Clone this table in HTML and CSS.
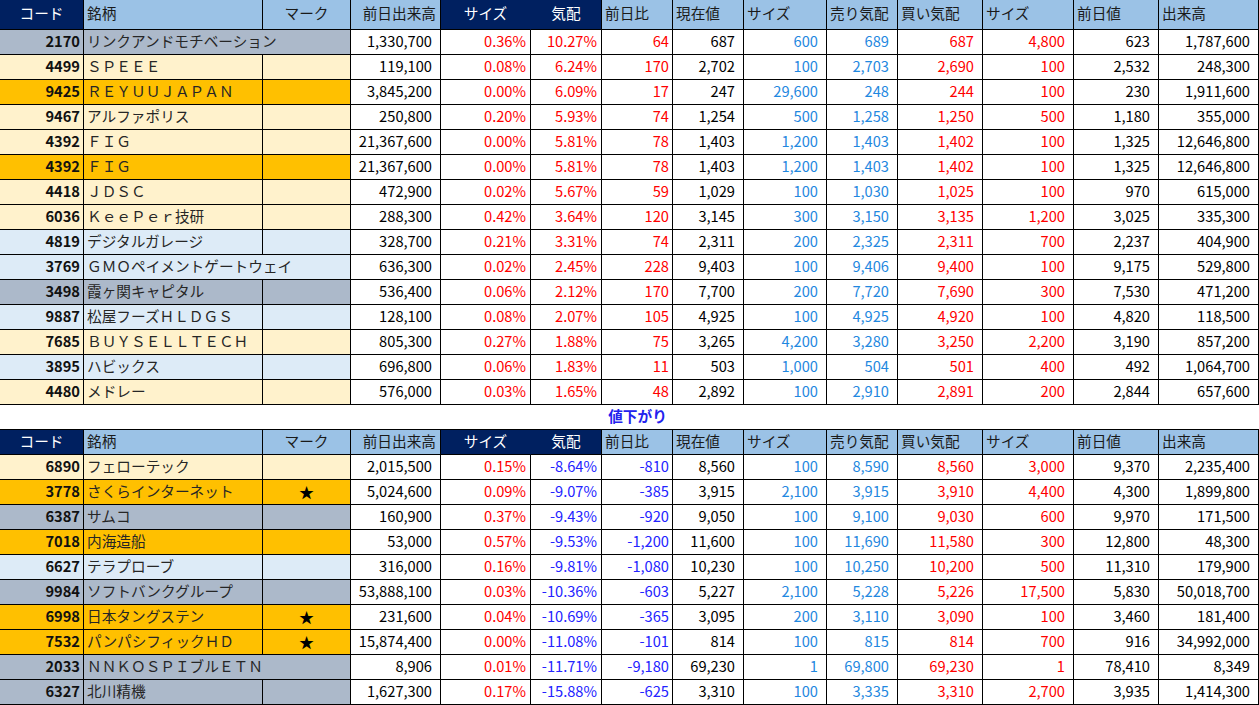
FILE: index.html
```html
<!DOCTYPE html>
<html lang="ja">
<head>
<meta charset="utf-8">
<title>値上がり・値下がり</title>
<link rel="stylesheet" href="styles.css">
</head>
<body>
<div class="sheet">
  <div class="row hdr hdr1">
    <div class="cell h-navy hc">コード</div>
    <div class="cell h-lb hl">銘柄</div>
    <div class="cell h-lb hc">マーク</div>
    <div class="cell h-lb hr">前日出来高</div>
    <div class="cell h-navy hc join">サイズ</div>
    <div class="cell h-navy hc">気配</div>
    <div class="cell h-lb hl">前日比</div>
    <div class="cell h-lb hl">現在値</div>
    <div class="cell h-lb hl">サイズ</div>
    <div class="cell h-lb hl">売り気配</div>
    <div class="cell h-lb hl">買い気配</div>
    <div class="cell h-lb hl">サイズ</div>
    <div class="cell h-lb hl">前日値</div>
    <div class="cell h-lb hl">出来高</div>
  </div>

  <div class="row">
    <div class="cell code bg-gray">2170</div>
    <div class="cell name bg-gray wide">リンクアンドモチベーション</div>
    <div class="cell num">1,330,700</div>
    <div class="cell pct red">0.36%</div>
    <div class="cell pct red">10.27%</div>
    <div class="cell chg red">64</div>
    <div class="cell num">687</div>
    <div class="cell num sky">600</div>
    <div class="cell num sky">689</div>
    <div class="cell num red">687</div>
    <div class="cell num red">4,800</div>
    <div class="cell num">623</div>
    <div class="cell num">1,787,600</div>
  </div>
  <div class="row">
    <div class="cell code bg-yel">4499</div>
    <div class="cell name bg-yel">ＳＰＥＥＥ</div>
    <div class="cell mark bg-yel"></div>
    <div class="cell num">119,100</div>
    <div class="cell pct red">0.08%</div>
    <div class="cell pct red">6.24%</div>
    <div class="cell chg red">170</div>
    <div class="cell num">2,702</div>
    <div class="cell num sky">100</div>
    <div class="cell num sky">2,703</div>
    <div class="cell num red">2,690</div>
    <div class="cell num red">100</div>
    <div class="cell num">2,532</div>
    <div class="cell num">248,300</div>
  </div>
  <div class="row">
    <div class="cell code bg-gold">9425</div>
    <div class="cell name bg-gold">ＲＥＹＵＵＪＡＰＡＮ</div>
    <div class="cell mark bg-gold"></div>
    <div class="cell num">3,845,200</div>
    <div class="cell pct red">0.00%</div>
    <div class="cell pct red">6.09%</div>
    <div class="cell chg red">17</div>
    <div class="cell num">247</div>
    <div class="cell num sky">29,600</div>
    <div class="cell num sky">248</div>
    <div class="cell num red">244</div>
    <div class="cell num red">100</div>
    <div class="cell num">230</div>
    <div class="cell num">1,911,600</div>
  </div>
  <div class="row">
    <div class="cell code bg-yel">9467</div>
    <div class="cell name bg-yel">アルファポリス</div>
    <div class="cell mark bg-yel"></div>
    <div class="cell num">250,800</div>
    <div class="cell pct red">0.20%</div>
    <div class="cell pct red">5.93%</div>
    <div class="cell chg red">74</div>
    <div class="cell num">1,254</div>
    <div class="cell num sky">500</div>
    <div class="cell num sky">1,258</div>
    <div class="cell num red">1,250</div>
    <div class="cell num red">500</div>
    <div class="cell num">1,180</div>
    <div class="cell num">355,000</div>
  </div>
  <div class="row">
    <div class="cell code bg-yel">4392</div>
    <div class="cell name bg-yel">ＦＩＧ</div>
    <div class="cell mark bg-yel"></div>
    <div class="cell num">21,367,600</div>
    <div class="cell pct red">0.00%</div>
    <div class="cell pct red">5.81%</div>
    <div class="cell chg red">78</div>
    <div class="cell num">1,403</div>
    <div class="cell num sky">1,200</div>
    <div class="cell num sky">1,403</div>
    <div class="cell num red">1,402</div>
    <div class="cell num red">100</div>
    <div class="cell num">1,325</div>
    <div class="cell num">12,646,800</div>
  </div>
  <div class="row">
    <div class="cell code bg-gold">4392</div>
    <div class="cell name bg-gold">ＦＩＧ</div>
    <div class="cell mark bg-gold"></div>
    <div class="cell num">21,367,600</div>
    <div class="cell pct red">0.00%</div>
    <div class="cell pct red">5.81%</div>
    <div class="cell chg red">78</div>
    <div class="cell num">1,403</div>
    <div class="cell num sky">1,200</div>
    <div class="cell num sky">1,403</div>
    <div class="cell num red">1,402</div>
    <div class="cell num red">100</div>
    <div class="cell num">1,325</div>
    <div class="cell num">12,646,800</div>
  </div>
  <div class="row">
    <div class="cell code bg-yel">4418</div>
    <div class="cell name bg-yel">ＪＤＳＣ</div>
    <div class="cell mark bg-yel"></div>
    <div class="cell num">472,900</div>
    <div class="cell pct red">0.02%</div>
    <div class="cell pct red">5.67%</div>
    <div class="cell chg red">59</div>
    <div class="cell num">1,029</div>
    <div class="cell num sky">100</div>
    <div class="cell num sky">1,030</div>
    <div class="cell num red">1,025</div>
    <div class="cell num red">100</div>
    <div class="cell num">970</div>
    <div class="cell num">615,000</div>
  </div>
  <div class="row">
    <div class="cell code bg-yel">6036</div>
    <div class="cell name bg-yel">ＫｅｅＰｅｒ技研</div>
    <div class="cell mark bg-yel"></div>
    <div class="cell num">288,300</div>
    <div class="cell pct red">0.42%</div>
    <div class="cell pct red">3.64%</div>
    <div class="cell chg red">120</div>
    <div class="cell num">3,145</div>
    <div class="cell num sky">300</div>
    <div class="cell num sky">3,150</div>
    <div class="cell num red">3,135</div>
    <div class="cell num red">1,200</div>
    <div class="cell num">3,025</div>
    <div class="cell num">335,300</div>
  </div>
  <div class="row">
    <div class="cell code bg-lb">4819</div>
    <div class="cell name bg-lb">デジタルガレージ</div>
    <div class="cell mark bg-lb"></div>
    <div class="cell num">328,700</div>
    <div class="cell pct red">0.21%</div>
    <div class="cell pct red">3.31%</div>
    <div class="cell chg red">74</div>
    <div class="cell num">2,311</div>
    <div class="cell num sky">200</div>
    <div class="cell num sky">2,325</div>
    <div class="cell num red">2,311</div>
    <div class="cell num red">700</div>
    <div class="cell num">2,237</div>
    <div class="cell num">404,900</div>
  </div>
  <div class="row">
    <div class="cell code bg-lb">3769</div>
    <div class="cell name bg-lb wide">ＧＭＯペイメントゲートウェイ</div>
    <div class="cell num">636,300</div>
    <div class="cell pct red">0.02%</div>
    <div class="cell pct red">2.45%</div>
    <div class="cell chg red">228</div>
    <div class="cell num">9,403</div>
    <div class="cell num sky">100</div>
    <div class="cell num sky">9,406</div>
    <div class="cell num red">9,400</div>
    <div class="cell num red">100</div>
    <div class="cell num">9,175</div>
    <div class="cell num">529,800</div>
  </div>
  <div class="row">
    <div class="cell code bg-gray">3498</div>
    <div class="cell name bg-gray">霞ヶ関キャピタル</div>
    <div class="cell mark bg-gray"></div>
    <div class="cell num">536,400</div>
    <div class="cell pct red">0.06%</div>
    <div class="cell pct red">2.12%</div>
    <div class="cell chg red">170</div>
    <div class="cell num">7,700</div>
    <div class="cell num sky">200</div>
    <div class="cell num sky">7,720</div>
    <div class="cell num red">7,690</div>
    <div class="cell num red">300</div>
    <div class="cell num">7,530</div>
    <div class="cell num">471,200</div>
  </div>
  <div class="row">
    <div class="cell code bg-lb">9887</div>
    <div class="cell name bg-lb">松屋フーズＨＬＤＧＳ</div>
    <div class="cell mark bg-lb"></div>
    <div class="cell num">128,100</div>
    <div class="cell pct red">0.08%</div>
    <div class="cell pct red">2.07%</div>
    <div class="cell chg red">105</div>
    <div class="cell num">4,925</div>
    <div class="cell num sky">100</div>
    <div class="cell num sky">4,925</div>
    <div class="cell num red">4,920</div>
    <div class="cell num red">100</div>
    <div class="cell num">4,820</div>
    <div class="cell num">118,500</div>
  </div>
  <div class="row">
    <div class="cell code bg-yel">7685</div>
    <div class="cell name bg-yel">ＢＵＹＳＥＬＬＴＥＣＨ</div>
    <div class="cell mark bg-yel"></div>
    <div class="cell num">805,300</div>
    <div class="cell pct red">0.27%</div>
    <div class="cell pct red">1.88%</div>
    <div class="cell chg red">75</div>
    <div class="cell num">3,265</div>
    <div class="cell num sky">4,200</div>
    <div class="cell num sky">3,280</div>
    <div class="cell num red">3,250</div>
    <div class="cell num red">2,200</div>
    <div class="cell num">3,190</div>
    <div class="cell num">857,200</div>
  </div>
  <div class="row">
    <div class="cell code bg-lb">3895</div>
    <div class="cell name bg-lb">ハビックス</div>
    <div class="cell mark bg-lb"></div>
    <div class="cell num">696,800</div>
    <div class="cell pct red">0.06%</div>
    <div class="cell pct red">1.83%</div>
    <div class="cell chg red">11</div>
    <div class="cell num">503</div>
    <div class="cell num sky">1,000</div>
    <div class="cell num sky">504</div>
    <div class="cell num red">501</div>
    <div class="cell num red">400</div>
    <div class="cell num">492</div>
    <div class="cell num">1,064,700</div>
  </div>
  <div class="row">
    <div class="cell code bg-yel">4480</div>
    <div class="cell name bg-yel">メドレー</div>
    <div class="cell mark bg-yel"></div>
    <div class="cell num">576,000</div>
    <div class="cell pct red">0.03%</div>
    <div class="cell pct red">1.65%</div>
    <div class="cell chg red">48</div>
    <div class="cell num">2,892</div>
    <div class="cell num sky">100</div>
    <div class="cell num sky">2,910</div>
    <div class="cell num red">2,891</div>
    <div class="cell num red">200</div>
    <div class="cell num">2,844</div>
    <div class="cell num">657,600</div>
  </div>

  <div class="row gap">
    <div class="gap-label">値下がり</div>
  </div>

  <div class="row hdr hdr2">
    <div class="cell h-navy hc">コード</div>
    <div class="cell h-lb hl">銘柄</div>
    <div class="cell h-lb hc">マーク</div>
    <div class="cell h-lb hr">前日出来高</div>
    <div class="cell h-navy hc join">サイズ</div>
    <div class="cell h-navy hc">気配</div>
    <div class="cell h-lb hl">前日比</div>
    <div class="cell h-lb hl">現在値</div>
    <div class="cell h-lb hl">サイズ</div>
    <div class="cell h-lb hl">売り気配</div>
    <div class="cell h-lb hl">買い気配</div>
    <div class="cell h-lb hl">サイズ</div>
    <div class="cell h-lb hl">前日値</div>
    <div class="cell h-lb hl">出来高</div>
  </div>

  <div class="row">
    <div class="cell code bg-yel">6890</div>
    <div class="cell name bg-yel">フェローテック</div>
    <div class="cell mark bg-yel"></div>
    <div class="cell num">2,015,500</div>
    <div class="cell pct red">0.15%</div>
    <div class="cell pct neg">-8.64%</div>
    <div class="cell chg neg">-810</div>
    <div class="cell num">8,560</div>
    <div class="cell num sky">100</div>
    <div class="cell num sky">8,590</div>
    <div class="cell num red">8,560</div>
    <div class="cell num red">3,000</div>
    <div class="cell num">9,370</div>
    <div class="cell num">2,235,400</div>
  </div>
  <div class="row">
    <div class="cell code bg-gold">3778</div>
    <div class="cell name bg-gold">さくらインターネット</div>
    <div class="cell mark bg-gold">★</div>
    <div class="cell num">5,024,600</div>
    <div class="cell pct red">0.09%</div>
    <div class="cell pct neg">-9.07%</div>
    <div class="cell chg neg">-385</div>
    <div class="cell num">3,915</div>
    <div class="cell num sky">2,100</div>
    <div class="cell num sky">3,915</div>
    <div class="cell num red">3,910</div>
    <div class="cell num red">4,400</div>
    <div class="cell num">4,300</div>
    <div class="cell num">1,899,800</div>
  </div>
  <div class="row">
    <div class="cell code bg-gray">6387</div>
    <div class="cell name bg-gray">サムコ</div>
    <div class="cell mark bg-gray"></div>
    <div class="cell num">160,900</div>
    <div class="cell pct red">0.37%</div>
    <div class="cell pct neg">-9.43%</div>
    <div class="cell chg neg">-920</div>
    <div class="cell num">9,050</div>
    <div class="cell num sky">100</div>
    <div class="cell num sky">9,100</div>
    <div class="cell num red">9,030</div>
    <div class="cell num red">600</div>
    <div class="cell num">9,970</div>
    <div class="cell num">171,500</div>
  </div>
  <div class="row">
    <div class="cell code bg-gold">7018</div>
    <div class="cell name bg-gold">内海造船</div>
    <div class="cell mark bg-gold"></div>
    <div class="cell num">53,000</div>
    <div class="cell pct red">0.57%</div>
    <div class="cell pct neg">-9.53%</div>
    <div class="cell chg neg">-1,200</div>
    <div class="cell num">11,600</div>
    <div class="cell num sky">100</div>
    <div class="cell num sky">11,690</div>
    <div class="cell num red">11,580</div>
    <div class="cell num red">300</div>
    <div class="cell num">12,800</div>
    <div class="cell num">48,300</div>
  </div>
  <div class="row">
    <div class="cell code bg-lb">6627</div>
    <div class="cell name bg-lb">テラプローブ</div>
    <div class="cell mark bg-lb"></div>
    <div class="cell num">316,000</div>
    <div class="cell pct red">0.16%</div>
    <div class="cell pct neg">-9.81%</div>
    <div class="cell chg neg">-1,080</div>
    <div class="cell num">10,230</div>
    <div class="cell num sky">100</div>
    <div class="cell num sky">10,250</div>
    <div class="cell num red">10,200</div>
    <div class="cell num red">500</div>
    <div class="cell num">11,310</div>
    <div class="cell num">179,900</div>
  </div>
  <div class="row">
    <div class="cell code bg-gray">9984</div>
    <div class="cell name bg-gray">ソフトバンクグループ</div>
    <div class="cell mark bg-gray"></div>
    <div class="cell num">53,888,100</div>
    <div class="cell pct red">0.03%</div>
    <div class="cell pct neg">-10.36%</div>
    <div class="cell chg neg">-603</div>
    <div class="cell num">5,227</div>
    <div class="cell num sky">2,100</div>
    <div class="cell num sky">5,228</div>
    <div class="cell num red">5,226</div>
    <div class="cell num red">17,500</div>
    <div class="cell num">5,830</div>
    <div class="cell num">50,018,700</div>
  </div>
  <div class="row">
    <div class="cell code bg-gold">6998</div>
    <div class="cell name bg-gold">日本タングステン</div>
    <div class="cell mark bg-gold">★</div>
    <div class="cell num">231,600</div>
    <div class="cell pct red">0.04%</div>
    <div class="cell pct neg">-10.69%</div>
    <div class="cell chg neg">-365</div>
    <div class="cell num">3,095</div>
    <div class="cell num sky">200</div>
    <div class="cell num sky">3,110</div>
    <div class="cell num red">3,090</div>
    <div class="cell num red">100</div>
    <div class="cell num">3,460</div>
    <div class="cell num">181,400</div>
  </div>
  <div class="row">
    <div class="cell code bg-gold">7532</div>
    <div class="cell name bg-gold">パンパシフィックＨＤ</div>
    <div class="cell mark bg-gold">★</div>
    <div class="cell num">15,874,400</div>
    <div class="cell pct red">0.00%</div>
    <div class="cell pct neg">-11.08%</div>
    <div class="cell chg neg">-101</div>
    <div class="cell num">814</div>
    <div class="cell num sky">100</div>
    <div class="cell num sky">815</div>
    <div class="cell num red">814</div>
    <div class="cell num red">700</div>
    <div class="cell num">916</div>
    <div class="cell num">34,992,000</div>
  </div>
  <div class="row">
    <div class="cell code bg-gray">2033</div>
    <div class="cell name bg-gray wide">ＮＮＫＯＳＰＩブルＥＴＮ</div>
    <div class="cell num">8,906</div>
    <div class="cell pct red">0.01%</div>
    <div class="cell pct neg">-11.71%</div>
    <div class="cell chg neg">-9,180</div>
    <div class="cell num">69,230</div>
    <div class="cell num sky">1</div>
    <div class="cell num sky">69,800</div>
    <div class="cell num red">69,230</div>
    <div class="cell num red">1</div>
    <div class="cell num">78,410</div>
    <div class="cell num">8,349</div>
  </div>
  <div class="row">
    <div class="cell code bg-gray">6327</div>
    <div class="cell name bg-gray">北川精機</div>
    <div class="cell mark bg-gray"></div>
    <div class="cell num">1,627,300</div>
    <div class="cell pct red">0.17%</div>
    <div class="cell pct neg">-15.88%</div>
    <div class="cell chg neg">-625</div>
    <div class="cell num">3,310</div>
    <div class="cell num sky">100</div>
    <div class="cell num sky">3,335</div>
    <div class="cell num red">3,310</div>
    <div class="cell num red">2,700</div>
    <div class="cell num">3,935</div>
    <div class="cell num">1,414,300</div>
  </div>
</div>
</body>
</html>
```

FILE: styles.css
```css
* { box-sizing: border-box; }

html, body {
  margin: 0;
  padding: 0;
  background: #ffffff;
}

body {
  font-family: "Noto Sans CJK JP", "Noto Sans", sans-serif;
  font-size: 14.67px;
  color: #000000;
  width: 1259px;
  height: 705px;
  overflow: hidden;
}

.sheet {
  display: flex;
  flex-direction: column;
  width: 1259px;
}

.row {
  display: grid;
  grid-template-columns: 84px 179px 88px 90px 90px 71px 71px 71px 83px 71px 85px 91px 85px 100px;
  height: 25px;
}

.hdr1 { height: 30px; }
.hdr2 {
  height: 26px;
  border-top: 1px solid #000000;
}

.cell {
  display: flex;
  align-items: center;
  justify-content: flex-end;
  white-space: nowrap;
  overflow: hidden;
  border-right: 1px solid #000000;
  border-bottom: 1px solid #000000;
  line-height: 1;
  padding: 0 8px 1px 3px;
  background: #ffffff;
}

/* header cells */
.h-navy { background: #002060; color: #ffffff; }
.h-lb { background: #9bc2e6; color: #1a1a1a; }
.hc { justify-content: center; padding: 0 0 1px 0; }
.hl { justify-content: flex-start; padding: 0 0 1px 3px; }
.hr { justify-content: flex-end; padding: 0 4px 1px 0; }
.hdr1 .cell { padding-bottom: 2px; }
.join { border-right-color: #002060; }

/* body cells */
.code {
  font-weight: 700;
  padding: 0 3px 1px 0;
  color: #111111;
}
.name {
  justify-content: flex-start;
  padding: 0 0 1px 3px;
  color: #262626;
}
.wide { grid-column: span 2; }
.mark {
  justify-content: center;
  padding: 0 0 1px 0;
  font-size: 15px;
}
.num { padding-right: 8px; }
.pct { padding-right: 4px; }
.chg { padding-right: 3px; }

.red { color: #ff0000; }
.neg { color: #2323ff; }
.sky { color: #1f88e0; }

.bg-gray { background: #acb9ca; }
.bg-yel { background: #fff2cc; }
.bg-gold { background: #ffc000; }
.bg-lb { background: #ddebf7; }

/* spacer row between the two tables */
.gap {
  height: 24px;
  align-items: center;
}
.gap-label {
  grid-column: 7;
  text-align: center;
  font-weight: 700;
  color: #2222ee;
  white-space: nowrap;
  line-height: 1;
  padding-bottom: 2px;
}
```
